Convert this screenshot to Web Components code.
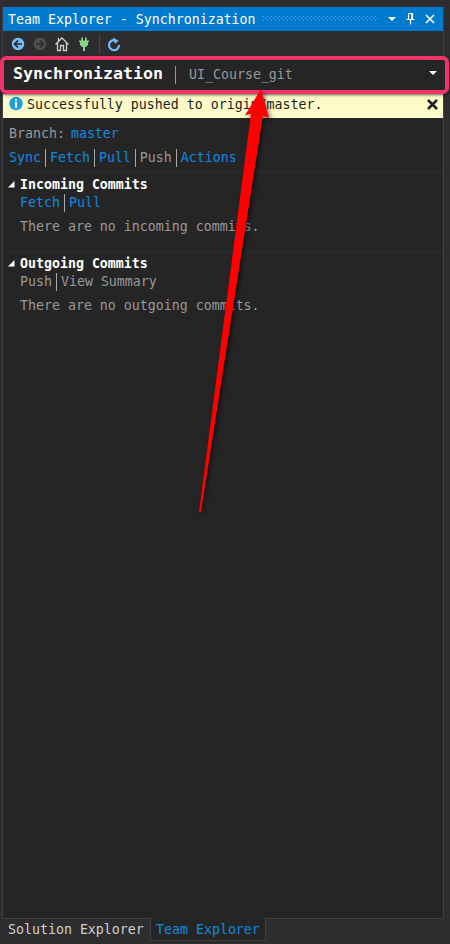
<!DOCTYPE html>
<html lang="en"><head><meta charset="utf-8"><title>Team Explorer</title>
<style>
html,body{margin:0;height:100%;background:#2d2d30;overflow:hidden}
body{font:13.288px/18px "DejaVu Sans Mono","Liberation Mono",monospace;color:#999}
</style></head><body>
<team-explorer></team-explorer>
<script>
const define=(name,html)=>customElements.define(name,class extends HTMLElement{
  constructor(){super();this.attachShadow({mode:'open'}).innerHTML=html;}
});
define('title-bar',`<style>
:host{display:flex;align-items:center;height:24px;background:#007acc;color:#fff;padding:0 8px 0 5px;white-space:pre}
.t{width:248px;padding-top:2px}
.grip{height:5px;width:116px;margin:0 0 1px 7px;background:linear-gradient(#59a8de,#59a8de) 0 0/1px 1px;background:conic-gradient(from 0deg at 1px 1px,transparent 270deg,#59a8de 0) 0 0/4px 4px,conic-gradient(from 0deg at 1px 1px,transparent 270deg,#59a8de 0) 2px 2px/4px 4px}
svg{display:block;margin-left:auto}
</style><span class="t"><slot></slot></span><i class="grip"></i>
<svg width="48" height="14" viewBox="387 12 48 14"><path d="M388 17h8l-4 4z" fill="#fff"/><path d="M408.5 19.5v-6h4v6M411.7 13v6M406.5 19.5h8M410.5 19.5v5" fill="none" stroke="#fff" stroke-width="1.1"/><path d="M426 15l8 8M434 15l-8 8" stroke="#fff" stroke-width="1.6"/></svg>`);
define('tool-bar',`<style>:host{display:block;height:25px;background:#2d2d30}svg{display:block}</style>
<svg width="140" height="25" viewBox="3 31 140 25" fill="none">
<circle cx="18" cy="44" r="6.2" fill="#75bdf5"/><path d="M22 44h-7M18 40.5L14.5 44l3.5 3.5" stroke="#252528" stroke-width="1.7"/>
<circle cx="40" cy="44" r="6.2" fill="#515153"/><path d="M36 44h7M40 40.5l3.5 3.500-3.500 3.500" stroke="#2d2d30" stroke-width="1.7"/>
<path d="M55.500 44.500L62 38l6.500 6.500M57.500 43v7.500h3v-5h3v5h3V43M58.500 41v-3" stroke="#d0d0d0" stroke-width="1.300"/>
<path d="M81.300 37.500h1.700v3h2v-3h1.700v3H89v1.500h-1v3l-2 2h-1V51h-2v-4h-1l-2-2v-3h-1v-1.500h2.300z" fill="#8bd38b"/>
<path d="M99.500 35v18" stroke="#46464a"/>
<path d="M114.500 40.200a5 5 0 1 0 4.500 4.800" stroke="#75bdf5" stroke-width="2.200"/><path d="M113.300 37.500l5.200 3.200-3.700 3.300z" fill="#75bdf5"/></svg>`);
define('page-heading',`<style>
:host{display:flex;align-items:center;height:30px;margin:0 -3px;width:441px;border:4px solid #f0346b;border-radius:6px;background:#252526;position:relative;box-shadow:0 1px 3px #0009;white-space:pre}
b{font-size:16.61px;color:#fff;margin-left:9px;width:150px;padding-bottom:2px}
.r{width:1px;height:18px;background:#999;margin:0 12px;margin-bottom:1px}
::slotted(span){margin-left:1px}
svg{margin-left:auto;margin-right:8px;margin-bottom:4px}
</style><b><slot></slot></b><i class="r"></i><slot name="project"></slot><svg width="8" height="4"><path d="M0 0h8L4 4z" fill="#fff"/></svg>`);
define('info-bar',`<style>
:host{display:flex;align-items:center;height:24px;background:#fdfbc8;color:#1e1e1e;padding:0 5px 0 6px;white-space:pre}
svg{display:block}.m{margin-left:4px;flex:1;padding-bottom:3px}
.i{margin-bottom:4px}.x{margin-bottom:3px}
</style><svg class="i" width="14" height="18" viewBox="0 0 14 18"><circle cx="7" cy="8.500" r="6.800" fill="#1ba1e2"/><path d="M6 4h2v2H6zM6 7h2v6H6z" fill="#fff"/></svg><span class="m"><slot></slot></span><svg class="x" width="11" height="11"><path d="M1 1l9 9M10 1L1 10" stroke="#1e1e1e" stroke-width="2.500"/></svg>`);
define('link-row',`<style>
:host{display:flex;height:18px;white-space:pre;align-items:center}
::slotted(*){padding-right:4px;margin-right:4px;border-right:1px solid #aaa}
::slotted(:last-child){border:0!important;margin:0}
::slotted(a){color:#0e8ae0}
</style><slot></slot>`);
define('commit-section',`<style>
:host{display:block;height:78px;border-top:1px solid #2f2f33;padding-left:17px;white-space:pre}
.h{display:flex;align-items:center;margin-left:-12px;padding-top:3px;color:#fff;font-weight:bold}
svg{width:7px;height:7px;margin:0 5px 2px 0}
.m{margin-top:6px}
</style><div class="h"><svg viewBox="0 0 7 7"><path d="M6.500 0v6.500H0z" fill="#fff"/></svg><slot name="title"></slot></div><slot name="links"></slot><div class="m"><slot></slot></div>`);
define('view-tabs',`<style>
:host{display:flex;height:26px;line-height:22px;white-space:pre}
.s{color:#d0d0d0;width:142px;padding-left:5px;border-top:1px solid #3f3f46}
.a{color:#0e8ae0;width:109px;padding-left:5px;height:21px;border:1px solid #3f3f46;border-top:1px solid #252526;background:#252526}
.f{flex:1;border-top:1px solid #3f3f46}
</style><div class="s"><slot name="other"></slot></div><div class="a"><slot name="active"></slot></div><div class="f"></div>`);
define('pointer-arrow',`<style>:host{position:absolute;left:0;top:0;pointer-events:none}svg{display:block;filter:drop-shadow(2px 2px 2px #0008)}</style>
<svg width="450" height="944"><path d="M261 89L269 118 263 115.500 201 512h-2L251 113.500 245 115.500z" fill="#fe0000"/></svg>`);
define('team-explorer',`<style>
:host{display:block;width:450px;height:944px;position:relative;overflow:hidden}
.p{margin:7px 0 0 2px;width:440px;height:911px;background:#252526;border:1px solid #3f3f46;border-width:0 1px}
.b{padding:7px 0 0 6px;white-space:pre;height:18px}.b a{color:#0e8ae0}
.l{margin:6px 0 5px 6px}
view-tabs{margin:0 6px 0 3px}
</style><div class="p"><title-bar>Team Explorer - Synchronization</title-bar><tool-bar></tool-bar>
<page-heading>Synchronization<span slot="project">UI_Course_git</span></page-heading>
<info-bar>Successfully pushed to origin/master.</info-bar>
<div class="b">Branch: <a style="margin-left:-2px">master</a></div>
<link-row class="l"><a>Sync</a><a>Fetch</a><a>Pull</a><span>Push</span><a>Actions</a></link-row>
<commit-section><span slot="title">Incoming Commits</span><link-row slot="links"><a>Fetch</a><a>Pull</a></link-row>There are no incoming commits.</commit-section>
<commit-section><span slot="title">Outgoing Commits</span><link-row slot="links"><span>Push</span><span>View Summary</span></link-row>There are no outgoing commits.</commit-section>
</div><view-tabs><span slot="other">Solution Explorer</span><span slot="active">Team Explorer</span></view-tabs><pointer-arrow></pointer-arrow>`);
</script></body></html>
